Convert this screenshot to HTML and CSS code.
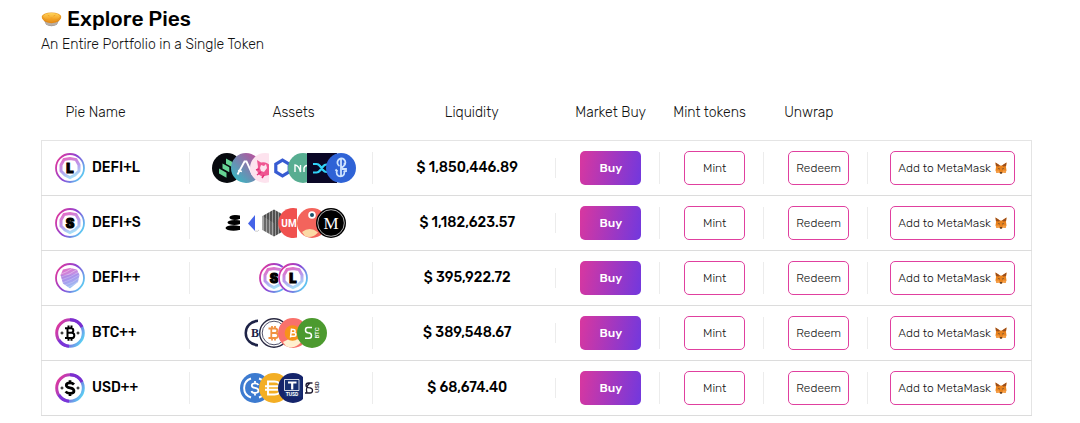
FILE: index.html
```
<!DOCTYPE html>
<html lang="en">
<head>
    <meta charset="UTF-8">
    <meta name="viewport" content="width=device-width, initial-scale=1.0">
    <title>Explore Pies</title>
    <link rel="stylesheet" href="styles.css">
</head>
<body>
    <!-- Icon sprite -->
    <svg class="sprite" aria-hidden="true">
        <defs>
            <linearGradient id="ring" x1="0" y1="0.2" x2="1" y2="0.8">
                <stop offset="0" stop-color="#e0379c"/>
                <stop offset="0.5" stop-color="#8a45d6"/>
                <stop offset="1" stop-color="#58d8f5"/>
            </linearGradient>
            <linearGradient id="soft" x1="0.3" y1="0" x2="0.7" y2="1">
                <stop offset="0" stop-color="#e070c8"/>
                <stop offset="0.5" stop-color="#b79aee"/>
                <stop offset="1" stop-color="#a5e2f8"/>
            </linearGradient>
            <linearGradient id="aaveFill" x1="1" y1="0" x2="0" y2="1">
                <stop offset="0.15" stop-color="#b2569f"/>
                <stop offset="0.85" stop-color="#3fb2c0"/>
            </linearGradient>
            <linearGradient id="pieFill" x1="0" y1="0" x2="0" y2="1">
                <stop offset="0" stop-color="#ffd45c"/>
                <stop offset="1" stop-color="#f29a1c"/>
            </linearGradient>
            <pattern id="mesh" width="3" height="2" patternUnits="userSpaceOnUse">
                <rect width="3" height="2" fill="#222"/>
                <path d="M0 1L1.5 0.2L3 1L1.5 1.800z" fill="#ddd"/>
            </pattern>
        </defs>

        <symbol id="pie" viewBox="0 0 22 16">
            <path d="M2 7h18l-3.5 7Q11 17 5.500 14z" fill="#8f8a86"/>
            <path d="M4 11h14l-1.500 3Q11 16 5.500 14z" fill="#b8aea5"/>
            <path d="M1 5.500Q1 12 11 12.500Q21 12 21 5.500z" fill="#e68a12"/>
            <ellipse cx="11" cy="6" rx="10.300" ry="4.800" fill="#e99a25"/>
            <ellipse cx="11" cy="5.500" rx="8.800" ry="3.700" fill="url(#pieFill)"/>
            <path d="M7 4l2 1M13 5l2-1M10 7h2" stroke="#f0a12b"/>
        </symbol>

        <symbol id="fox" viewBox="0 0 12 12">
            <path d="M0.500 0.500L5 3.500h2l4.500-3L11 5l0.500 3.500L10.500 11L8 10.500L7 11.500H5L4 10.500L1.500 11L0.500 8.500L1 5z" fill="#e8821e"/>
            <path d="M0.500 0.500L5 3.500L3.500 4.500L1 4zM11.500 0.500L7 3.500l1.500 1L11 4z" fill="#9b4f1c"/>
            <path d="M3 6l1.500 0.500v1.200zM9 6l-1.500 0.500v1.200z" fill="#233447"/>
            <path d="M5 10.300h2v1.200H5z" fill="#3b2a22"/>
            <path d="M1 8.500h3l0.500 1.500L1.500 11zM11 8.500H8L7.500 10l3 1z" fill="#f5a04a"/>
        </symbol>

        <!-- shared frame of the DEFI+L and DEFI+S coins -->
        <symbol id="defi" viewBox="0 0 30 30">
            <circle cx="15" cy="15" r="15" fill="#fff"/>
            <circle cx="15" cy="15" r="14" fill="none" stroke="url(#ring)" stroke-width="1.800"/>
            <path d="M9 6.500L15 5.500L21 6.500L24 12V18L20 22L15 24.500L10 22L6 18V12z" fill="none" stroke="url(#soft)" stroke-width="3"/>
        </symbol>

        <symbol id="defi-pp" viewBox="0 0 30 30">
            <circle cx="15" cy="15" r="14" fill="#fff" stroke="url(#ring)" stroke-width="1.800"/>
            <path d="M8 6.500L15 5L22 6.500L24.500 12L23 19L15 25.500L8 20.500L5.500 12z" fill="url(#soft)"/>
            <path d="M6 14Q14 12 22 6.500M6 17Q16 14 24 9M7 20Q16 17 24 12M10 22Q18 20 24 15M13 24Q19 22 23 18.500M6 11Q12 9 17 5.500" fill="none" stroke="#fff" stroke-width="0.600" opacity="0.600"/>
            <path d="M5.500 12L15 12L24 10L23 19L15 25L8 20.500z" fill="#7d7ee8" opacity="0.250"/>
        </symbol>

        <symbol id="btc-pp" viewBox="0 0 30 30">
            <circle cx="15" cy="15" r="13.300" fill="#fff" stroke="url(#ring)" stroke-width="3"/>
            <path d="M15 1.700A13.300 13.300 0 0 1 27 9" fill="none" stroke="#7a2fd0" stroke-width="3"/>
            <path d="M4 22A13 13 0 0 0 14 28.200" fill="none" stroke="#7a35d8" stroke-width="3"/>
            <path d="M12 10.200h4a2.300 2.300 0 0 1 0 4.600h-4M12 14.800h4.700a2.600 2.600 0 0 1 0 5.200H12M12.500 9.500v11M10 10.200h2.500M10 20h2.500M13.500 7.500v2.500M16.500 7.500v2.500M13.500 20v2.700M16.500 20v2.700" fill="none" stroke="#000" stroke-width="2"/>
            <path d="M5.500 15h3M7 13.500v3M21.500 15h3M23 13.500v3" stroke="#000" stroke-width="1"/>
        </symbol>

        <symbol id="usd-pp" viewBox="0 0 30 30">
            <circle cx="15" cy="15" r="13.300" fill="#fff" stroke="url(#ring)" stroke-width="3"/>
            <path d="M15 1.700A13.300 13.300 0 0 1 27 9" fill="none" stroke="#7a2fd0" stroke-width="3"/>
            <path d="M4 22A13 13 0 0 0 14 28.200" fill="none" stroke="#7a35d8" stroke-width="3"/>
            <path d="M19 11.500Q17.500 9.800 15 9.800Q11.300 9.800 11.300 12.200Q11.300 14.200 15 14.800Q19 15.500 19 18Q19 20.400 15 20.400Q12 20.400 10.600 18.500M15 7.200v3M15 20v3" fill="none" stroke="#000" stroke-width="2.700"/>
            <path d="M5.500 15h3M7 13.500v3M21.500 15h3M23 13.500v3" stroke="#000" stroke-width="1"/>
        </symbol>

        <symbol id="comp" viewBox="0 0 30 30">
            <circle cx="15" cy="15" r="15" fill="#070a0e"/>
            <path d="M14 5.500l6 3.300v5.200l-6-3.300zM10.500 10.500l6.800 3.800v5l-6.800-3.800zM7 15.500l7.500 4.200v5L7 20.500z" fill="#66d494"/>
        </symbol>

        <symbol id="aave" viewBox="0 0 30 30">
            <circle cx="15" cy="15" r="15" fill="url(#aaveFill)"/>
            <path d="M6.500 21.500L13.500 8.500H15.500L21.500 21.500M7 17.500L11 18.500" fill="none" stroke="#fff" stroke-width="1.800"/>
        </symbol>

        <symbol id="uni" viewBox="0 0 30 30">
            <circle cx="15" cy="15" r="15" fill="#fde3ee"/>
            <path d="M7 7l4 2.500Q16 8 21 13L19 22l-7 1.500Q5 20 8 14z" fill="#ef5691"/>
            <path d="M11 12l3 1 2-2 1 4-3 4-3-1-1-3z" fill="#fde3ee"/>
            <path d="M7 22l4-3M12 25l2-3M6 17l3-1" stroke="#e52f79" stroke-width="1.500"/>
        </symbol>

        <symbol id="link" viewBox="0 0 30 30">
            <rect width="30" height="30" fill="#fff"/>
            <path d="M13.500 7.200l6.700 3.900v7.800l-6.700 3.900l-6.700-3.900v-7.800z" fill="none" stroke="#375bd2" stroke-width="3.200"/>
        </symbol>

        <symbol id="nmr" viewBox="0 0 30 30">
            <circle cx="15" cy="15" r="15" fill="#57ad91"/>
            <path d="M7 19V12Q11 12.500 12.500 19V12M16 19v-4q1-3 4-2.500" fill="none" stroke="#fff" stroke-width="1.400"/>
        </symbol>

        <symbol id="snx" viewBox="0 0 30 30">
            <rect width="30" height="30" fill="#0a0726"/>
            <path d="M6 11h3.500q2 0 3.500 2l3 4q1.500 2 3.500 2H23M6 19.500h3.500q2 0 3.500-2l3-4q1.500-2 3.500-2H23" fill="none" stroke="#31d2f7" stroke-width="2.200"/>
        </symbol>

        <symbol id="yfi" viewBox="0 0 30 30">
            <circle cx="15" cy="15" r="15" fill="#2f63d6"/>
            <path d="M13.500 13A4 4 0 1 1 18 12.500M15 5v19M11 17.500A4 4 0 1 0 18 17.500M9.500 16.500l2 2M18.500 9.500A4 4 0 0 1 14.500 14.500M16 16h4v3" fill="none" stroke="#cfe4ff" stroke-width="1.800"/>
        </symbol>

        <symbol id="bal" viewBox="0 0 30 30">
            <ellipse cx="14" cy="9.500" rx="5.500" ry="2.600"/>
            <ellipse cx="13.500" cy="14.500" rx="7" ry="2.500"/>
            <ellipse cx="12.500" cy="20" rx="8" ry="2.800"/>
            <path d="M15 7.500h4.500v3.500H15zM15 12.500h5.500v3.500H15zM15 18h5.800v4H15z"/>
        </symbol>

        <symbol id="bnt" viewBox="0 0 30 30">
            <rect width="30" height="30" fill="#fff"/>
            <path d="M8 15.500L15 7V23z" fill="#4563e8"/>
            <path d="M15 23q3 1 4-1" fill="none" stroke="#aaa" stroke-width="0.600"/>
        </symbol>

        <symbol id="ren" viewBox="0 0 30 30">
            <path d="M15 1.500L26.500 8V22L15 28.500L3.500 22V8z" fill="url(#mesh)"/>
            <path d="M15 15v13.500L3.500 22V8z" fill="#fff" opacity="0.150"/>
        </symbol>

        <symbol id="uma" viewBox="0 0 30 30">
            <path d="M19 0.500A15 15 0 1 0 19 29.500z" fill="#f0514f"/>
        </symbol>

        <symbol id="pnt" viewBox="0 0 30 30">
            <circle cx="15" cy="15" r="15" fill="#f3645c"/>
            <path d="M5 24Q13 18 21 24.500Q15 31 8 28.300z" fill="#fbd9a5"/>
            <circle cx="15" cy="7" r="3.800" fill="#fff"/>
            <circle cx="15" cy="7" r="2" fill="#17516b"/>
        </symbol>

        <symbol id="mta" viewBox="0 0 30 30">
            <circle cx="15" cy="15" r="15" fill="#000"/>
            <circle cx="15" cy="15" r="13.300" fill="none" stroke="#ddd" stroke-width="0.800"/>
        </symbol>

        <symbol id="bcpt" viewBox="0 0 30 30">
            <path d="M18 1.500A13.500 13.500 0 1 0 18 28.500V26Q7 24 7 15Q7 6 18 4z" fill="#1e2347"/>
        </symbol>

        <symbol id="wbtc" viewBox="0 0 30 30">
            <circle cx="15" cy="15" r="14.300" fill="#fff" stroke="#292942" stroke-width="1.400"/>
            <circle cx="15" cy="15" r="11.800" fill="none" stroke="#41415b" stroke-width="0.900"/>
            <path d="M12 10.500h4a2.200 2.200 0 0 1 0 4.500h-4M12 15h4.500a2.500 2.500 0 0 1 0 5H12M12.300 9.500v11M9.500 10.500h3M9.500 20h3M13 8v2.500M16 8v2.500M13 20v2.500M16 20v2.500" fill="none" stroke="#f09242" stroke-width="1.800"/>
        </symbol>

        <symbol id="pbtc" viewBox="0 0 30 30">
            <circle cx="15" cy="15" r="15" fill="#f9716b"/>
            <path d="M5 24Q14 18 24 23Q17 32 8 28.300z" fill="#fff0cf"/>
            <circle cx="14.500" cy="15" r="7.800" fill="#f7931a"/>
            <path d="M13.500 11.500h2a1.500 1.500 0 0 1 0 3.300h-2.400h3a1.600 1.600 0 0 1 0 3.500h-3.500M13.500 10.500l-1 9" fill="none" stroke="#fff" stroke-width="1.500"/>
        </symbol>

        <symbol id="sbtc" viewBox="0 0 30 30">
            <circle cx="15" cy="15" r="15" fill="#4c9a2f"/>
            <path d="M15 9.500H10.500Q8.500 9.500 8.500 12Q8.500 14.500 11 14.800Q14.500 15 14.500 17.500Q14.500 20.300 12 20.300H8" fill="none" stroke="#fff" stroke-width="1.500"/>
        </symbol>

        <symbol id="usdc" viewBox="0 0 30 30">
            <circle cx="15" cy="15" r="15" fill="#3d7bd0"/>
            <path d="M11 5.500A10 10 0 0 0 11 24.500M19 5.500A10 10 0 0 1 19 24.500" fill="none" stroke="#fff" stroke-width="1.900"/>
            <path d="M18.500 12Q17.500 10.300 15 10.300Q11.800 10.300 11.800 12.500Q11.800 14.500 15 14.900Q18.500 15.500 18.500 17.600Q18.500 20 15 20Q12 20 11.500 18M15 8v2.500M15 20v2.500" fill="none" stroke="#fff" stroke-width="1.800"/>
        </symbol>

        <symbol id="dai" viewBox="0 0 30 30">
            <circle cx="15" cy="15" r="15" fill="#f3ae24"/>
            <path d="M9 8.500h6.500q6 0 6 6.500t-6 6.500H9zM6 13.200h18M6 16.800h18" fill="none" stroke="#fff" stroke-width="1.900"/>
        </symbol>

        <symbol id="tusd" viewBox="0 0 30 30">
            <circle cx="15" cy="15" r="15" fill="#15246b"/>
            <rect x="6.500" y="6.500" width="17" height="17.500" fill="#183072"/>
            <path d="M6.500 17.500v-11H21v11z" fill="none" stroke="#fff" stroke-width="0.800"/>
            <path d="M10 9.500h8.500M14.200 9.500v7" stroke="#fff" stroke-width="2.200"/>
        </symbol>

        <symbol id="susd" viewBox="0 0 30 30">
            <rect x="6" width="24" height="30" fill="#fff"/>
            <path d="M15.500 10H11.500Q9 10 9 12.300Q9 14.300 11.500 14.700Q15.500 15 15.500 17.500Q15.500 20 13 20H8M13 10Q8 14 10 20" fill="none" stroke="#1e1a31" stroke-width="1.300"/>
        </symbol>
    </svg>

    <main class="container">
        <h1><svg class="pie-icon"><use href="#pie"/></svg>Explore Pies</h1>
        <p class="subtitle">An Entire Portfolio in a Single Token</p>

        <table class="pies">
            <colgroup>
                <col class="col-name">
                <col class="col-wide">
                <col class="col-wide">
                <col class="col-action">
                <col class="col-action">
                <col class="col-action">
                <col class="col-wallet">
            </colgroup>
            <thead>
                <tr>
                    <th class="th-name">Pie Name</th>
                    <th class="th-assets">Assets</th>
                    <th class="th-liquidity">Liquidity</th>
                    <th class="th-buy">Market Buy</th>
                    <th class="th-mint">Mint tokens</th>
                    <th class="th-unwrap">Unwrap</th>
                    <td></td>
                </tr>
            </thead>
            <tbody>
                <tr>
                    <td><div class="name"><svg class="coin"><use href="#defi"/><text x="15" y="20" class="glyph-heavy">L</text></svg>DEFI+L</div></td>
                    <td>
                        <div class="assets">
                            <svg class="coin"><use href="#comp"/></svg>
                            <svg class="coin"><use href="#aave"/></svg>
                            <svg class="coin"><use href="#uni"/></svg>
                            <svg class="coin"><use href="#link"/></svg>
                            <svg class="coin"><use href="#nmr"/></svg>
                            <svg class="coin"><use href="#snx"/></svg>
                            <svg class="coin"><use href="#yfi"/></svg>
                        </div>
                    </td>
                    <td class="liquidity">$ 1,850,446.89</td>
                    <td class="action"><button class="btn buy-btn">Buy</button></td>
                    <td class="action"><button class="btn">Mint</button></td>
                    <td class="action"><button class="btn">Redeem</button></td>
                    <td class="wallet"><button class="btn wallet-btn">Add to MetaMask <svg class="fox-icon"><use href="#fox"/></svg></button></td>
                </tr>
                <tr>
                    <td><div class="name"><svg class="coin"><use href="#defi"/><text x="15" y="20" class="glyph-heavy">S</text></svg>DEFI+S</div></td>
                    <td>
                        <div class="assets">
                            <svg class="coin"><use href="#bal"/></svg>
                            <svg class="coin"><use href="#bnt"/></svg>
                            <svg class="coin"><use href="#ren"/></svg>
                            <svg class="coin"><use href="#uma"/><text x="11" y="19" class="glyph-uma">UM</text></svg>
                            <svg class="coin"><use href="#pnt"/></svg>
                            <svg class="coin"><use href="#mta"/><text x="15" y="21" class="glyph-serif">M</text></svg>
                        </div>
                    </td>
                    <td class="liquidity">$ 1,182,623.57</td>
                    <td class="action"><button class="btn buy-btn">Buy</button></td>
                    <td class="action"><button class="btn">Mint</button></td>
                    <td class="action"><button class="btn">Redeem</button></td>
                    <td class="wallet"><button class="btn wallet-btn">Add to MetaMask <svg class="fox-icon"><use href="#fox"/></svg></button></td>
                </tr>
                <tr>
                    <td><div class="name"><svg class="coin"><use href="#defi-pp"/></svg>DEFI++</div></td>
                    <td>
                        <div class="assets">
                            <svg class="coin"><use href="#defi"/><text x="15" y="20" class="glyph-heavy">S</text></svg>
                            <svg class="coin"><use href="#defi"/><text x="15" y="20" class="glyph-heavy">L</text></svg>
                        </div>
                    </td>
                    <td class="liquidity">$ 395,922.72</td>
                    <td class="action"><button class="btn buy-btn">Buy</button></td>
                    <td class="action"><button class="btn">Mint</button></td>
                    <td class="action"><button class="btn">Redeem</button></td>
                    <td class="wallet"><button class="btn wallet-btn">Add to MetaMask <svg class="fox-icon"><use href="#fox"/></svg></button></td>
                </tr>
                <tr>
                    <td><div class="name"><svg class="coin"><use href="#btc-pp"/></svg>BTC++</div></td>
                    <td>
                        <div class="assets">
                            <svg class="coin"><use href="#bcpt"/><text x="15" y="19" class="glyph-navy">B</text></svg>
                            <svg class="coin"><use href="#wbtc"/></svg>
                            <svg class="coin"><use href="#pbtc"/></svg>
                            <svg class="coin"><use href="#sbtc"/><text x="-15" y="22" transform="rotate(-90)" class="glyph-side">BTC</text></svg>
                        </div>
                    </td>
                    <td class="liquidity">$ 389,548.67</td>
                    <td class="action"><button class="btn buy-btn">Buy</button></td>
                    <td class="action"><button class="btn">Mint</button></td>
                    <td class="action"><button class="btn">Redeem</button></td>
                    <td class="wallet"><button class="btn wallet-btn">Add to MetaMask <svg class="fox-icon"><use href="#fox"/></svg></button></td>
                </tr>
                <tr>
                    <td><div class="name"><svg class="coin"><use href="#usd-pp"/></svg>USD++</div></td>
                    <td>
                        <div class="assets">
                            <svg class="coin"><use href="#usdc"/></svg>
                            <svg class="coin"><use href="#dai"/></svg>
                            <svg class="coin"><use href="#tusd"/><text x="14" y="23" class="glyph-tiny">TUSD</text></svg>
                            <svg class="coin"><use href="#susd"/><text x="-14" y="22" transform="rotate(-90)" class="glyph-side dark">USD</text></svg>
                        </div>
                    </td>
                    <td class="liquidity">$ 68,674.40</td>
                    <td class="action"><button class="btn buy-btn">Buy</button></td>
                    <td class="action"><button class="btn">Mint</button></td>
                    <td class="action"><button class="btn">Redeem</button></td>
                    <td class="wallet"><button class="btn wallet-btn">Add to MetaMask <svg class="fox-icon"><use href="#fox"/></svg></button></td>
                </tr>
            </tbody>
        </table>
    </main>
</body>
</html>
```

FILE: styles.css
```
* {
    box-sizing: border-box;
}

body {
    font-family: Rubik, Roboto, sans-serif;
    font-size: 14px;
    font-weight: 300;
    margin: 0;
    background: white;
    color: #111;
}

.sprite {
    position: absolute;
    width: 0;
    height: 0;
}

.container {
    padding: 6px 48px 8px 41px;
}

h1 {
    display: flex;
    align-items: center;
    gap: 5px;
    margin: 0;
    font-size: 21px;
    font-weight: 500;
    line-height: 26px;
    color: #000;
}

.pie-icon {
    width: 21px;
    height: 16px;
}

.subtitle {
    margin: 3px 0 40px;
    line-height: 20px;
}

.pies {
    width: 100%;
    table-layout: fixed;
    border-collapse: collapse;
}

.col-name {
    width: 15%;
}

.col-wide {
    width: 18.5%;
}

.col-action {
    width: 10.5%;
}

.col-wallet {
    width: 16.5%;
}

th {
    height: 45px;
    padding: 0 0 9px;
    font-weight: 300;
    text-align: left;
    white-space: nowrap;
}

.th-name {
    padding-left: 24px;
}

.th-assets {
    padding-left: 24px;
    text-align: center;
}

.th-liquidity {
    padding-left: 14px;
    text-align: center;
}

.th-buy {
    padding-left: 19px;
}

.th-mint {
    padding-left: 13px;
}

.th-unwrap {
    padding-left: 20px;
}

tbody {
    border: 1px solid #e4e4e4;
}

tbody tr {
    border-bottom: 1px solid #dcdcdc;
}

/* short divider on the right of every cell */
tbody td {
    height: 55px;
    padding: 0;
    background: linear-gradient(#ececec, #ececec) no-repeat right center / 1px 32px;
}

tbody td:last-child {
    background: none;
}

.name {
    display: flex;
    align-items: center;
    gap: 7px;
    padding-left: 13px;
    font-weight: 500;
    color: #000;
}

.coin {
    width: 30px;
    height: 30px;
    flex: none;
}

.assets {
    display: flex;
    justify-content: center;
    padding-left: 4px;
}

.assets .coin + .coin {
    margin-left: -11px;
}

tbody .liquidity {
    padding-left: 5px;
    font-weight: 500;
    text-align: center;
    color: #000;
    background-size: 1px 20px;
}

tbody .action {
    padding-left: 24px;
}

tbody .wallet {
    padding-left: 22px;
}

.btn {
    display: flex;
    align-items: center;
    justify-content: center;
    gap: 4px;
    width: 61px;
    height: 34px;
    padding: 0;
    border: 1px solid #e0409f;
    border-radius: 5px;
    background: white;
    color: #111;
    font-family: inherit;
    font-size: 12px;
    font-weight: 300;
    white-space: nowrap;
    cursor: pointer;
}

.buy-btn {
    border: none;
    background: linear-gradient(100deg, #d9379f, #7138de);
    color: white;
    font-weight: 500;
}

.wallet-btn {
    width: 125px;
}

.fox-icon {
    width: 12px;
    height: 12px;
}

/* letters inside the coin icons */
.coin text {
    text-anchor: middle;
}

.glyph-heavy {
    font: 900 13px Inter, sans-serif;
    stroke: black;
}

.glyph-uma {
    font: 700 10px Roboto, sans-serif;
    fill: white;
}

.glyph-serif {
    font: 17px "Liberation Serif", serif;
    fill: white;
}

.glyph-navy {
    font: bold 12px "Liberation Serif", serif;
    fill: #1e2347;
}

.glyph-side {
    font: 500 6px Roboto, sans-serif;
    fill: white;
}

.glyph-side.dark {
    fill: #1e1a31;
}

.glyph-tiny {
    font: 700 5px Roboto, sans-serif;
    fill: white;
}
```
